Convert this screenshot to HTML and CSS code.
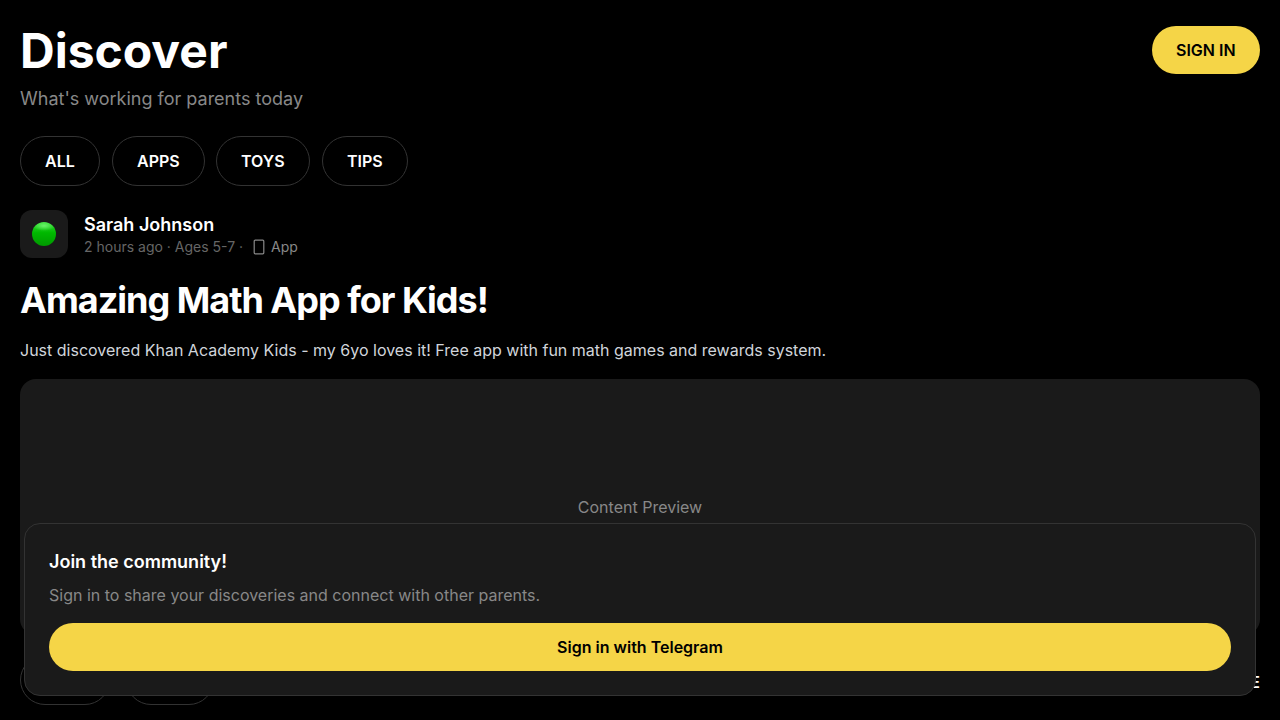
FILE: index.html
```html
<!DOCTYPE html>
<html lang="en">
<head>
<meta charset="utf-8">
<title>Discover</title>
<link rel="stylesheet" href="styles.css">
</head>
<body>
<main class="page">
  <header class="header">
    <div>
      <h1 class="title">Discover</h1>
      <p class="subtitle">What's working for parents today</p>
    </div>
    <button class="button sign-in">SIGN IN</button>
  </header>
  <nav class="filters">
    <button class="pill">ALL</button>
    <button class="pill">APPS</button>
    <button class="pill">TOYS</button>
    <button class="pill">TIPS</button>
  </nav>
  <article class="post">
    <div class="author">
      <div class="avatar"><span class="avatar-dot"></span></div>
      <div class="author-info">
        <div class="author-name">Sarah Johnson</div>
        <div class="meta">
          <span class="meta-text">2 hours ago · Ages 5-7 ·</span>
          <svg class="type-icon" width="12" height="16" viewBox="0 0 12 16"><rect x="1.2" y="1.2" width="9.6" height="13.6" rx="1" fill="none" stroke="currentColor" stroke-width="1.2"/></svg>
          <span class="type">App</span>
        </div>
      </div>
    </div>
    <h2 class="post-title">Amazing Math App for Kids!</h2>
    <p class="post-body">Just discovered Khan Academy Kids - my 6yo loves it! Free app with fun math games and rewards system.</p>
    <div class="preview">Content Preview</div>
    <div class="actions">
      <button class="pill action like">♡ 24</button>
      <button class="pill action comment">○ 8</button>
      <span class="share">SHARE</span>
    </div>
  </article>
</main>
<aside class="prompt">
  <h3 class="prompt-title">Join the community!</h3>
  <p class="prompt-text">Sign in to share your discoveries and connect with other parents.</p>
  <button class="button telegram">Sign in with Telegram</button>
</aside>
</body>
</html>
```
FILE: styles.css
```css
* { box-sizing: border-box; margin: 0; padding: 0; }
body {
  background: #000;
  color: #fff;
  font-family: Inter, "Liberation Sans", sans-serif;
  font-size: 16px;
  line-height: 24px;
  height: 720px;
  overflow: hidden;
  -webkit-font-smoothing: antialiased;
}
button { font: inherit; color: inherit; border: 0; background: none; white-space: nowrap; }
.page { padding: 24px 20px; }
.header { display: flex; justify-content: space-between; align-items: flex-start; }
.title { font-size: 48px; line-height: 53px; font-weight: 700; }
.subtitle { margin-top: 8px; font-size: 18px; line-height: 27px; color: #888; }
.button { height: 48px; border-radius: 24px; background: #f5d547; color: #000; font-weight: 600; }
.sign-in { padding: 0 24px; margin-top: 2.4px; transform: scale(0.9999); }
.filters { display: flex; gap: 12px; margin-top: 24px; }
.pill { height: 50px; padding: 0 24px; border: 1px solid #333; border-radius: 25px; font-weight: 600; transform: scale(0.9999); }
.author { display: flex; align-items: center; gap: 16px; margin-top: 24px; }
.avatar { display: flex; align-items: center; justify-content: center; width: 48px; height: 48px; border-radius: 12px; background: #1a1a1a; }
.avatar-dot {
  width: 24px; height: 24px; border-radius: 50%;
  background: radial-gradient(ellipse 11px 5px at 50% 16%, rgba(130, 255, 130, 0.75), transparent), linear-gradient(#35e035, #00b800 45%, #009a00);
}
.author-name { position: relative; top: 1px; font-size: 18px; line-height: 24px; font-weight: 600; }
.meta { display: flex; align-items: center; font-size: 14px; line-height: 21px; color: #666; }
.type-icon { margin: 1px 6px 0 10px; color: #888; }
.type { color: #888; }
.post-title { margin-top: 20px; font-size: 36px; line-height: 45px; font-weight: 700; letter-spacing: -1px; }
.post-body { margin-top: 14px; line-height: 26px; color: #d1d5db; }
.preview { display: flex; align-items: center; justify-content: center; height: 256px; margin-top: 16px; border-radius: 16px; background: #1a1a1a; color: #888; }
.actions { display: flex; align-items: center; gap: 16px; margin-top: 20px; }
.action { flex: none; padding: 0; }
.like { width: 90.4px; }
.comment { width: 88px; }
.share { margin: 4px 0 0 auto; font-weight: 600; }
.prompt { position: absolute; left: 24px; right: 24px; bottom: 24px; z-index: 1; height: 173px; padding: 24px; border: 1px solid #333; border-radius: 16px; background: #1a1a1a; }
.prompt-title { font-size: 18px; line-height: 27px; font-weight: 600; }
.prompt-text { margin: 8px 0 16px; color: #888; }
.telegram { display: block; width: 100%; }
```
